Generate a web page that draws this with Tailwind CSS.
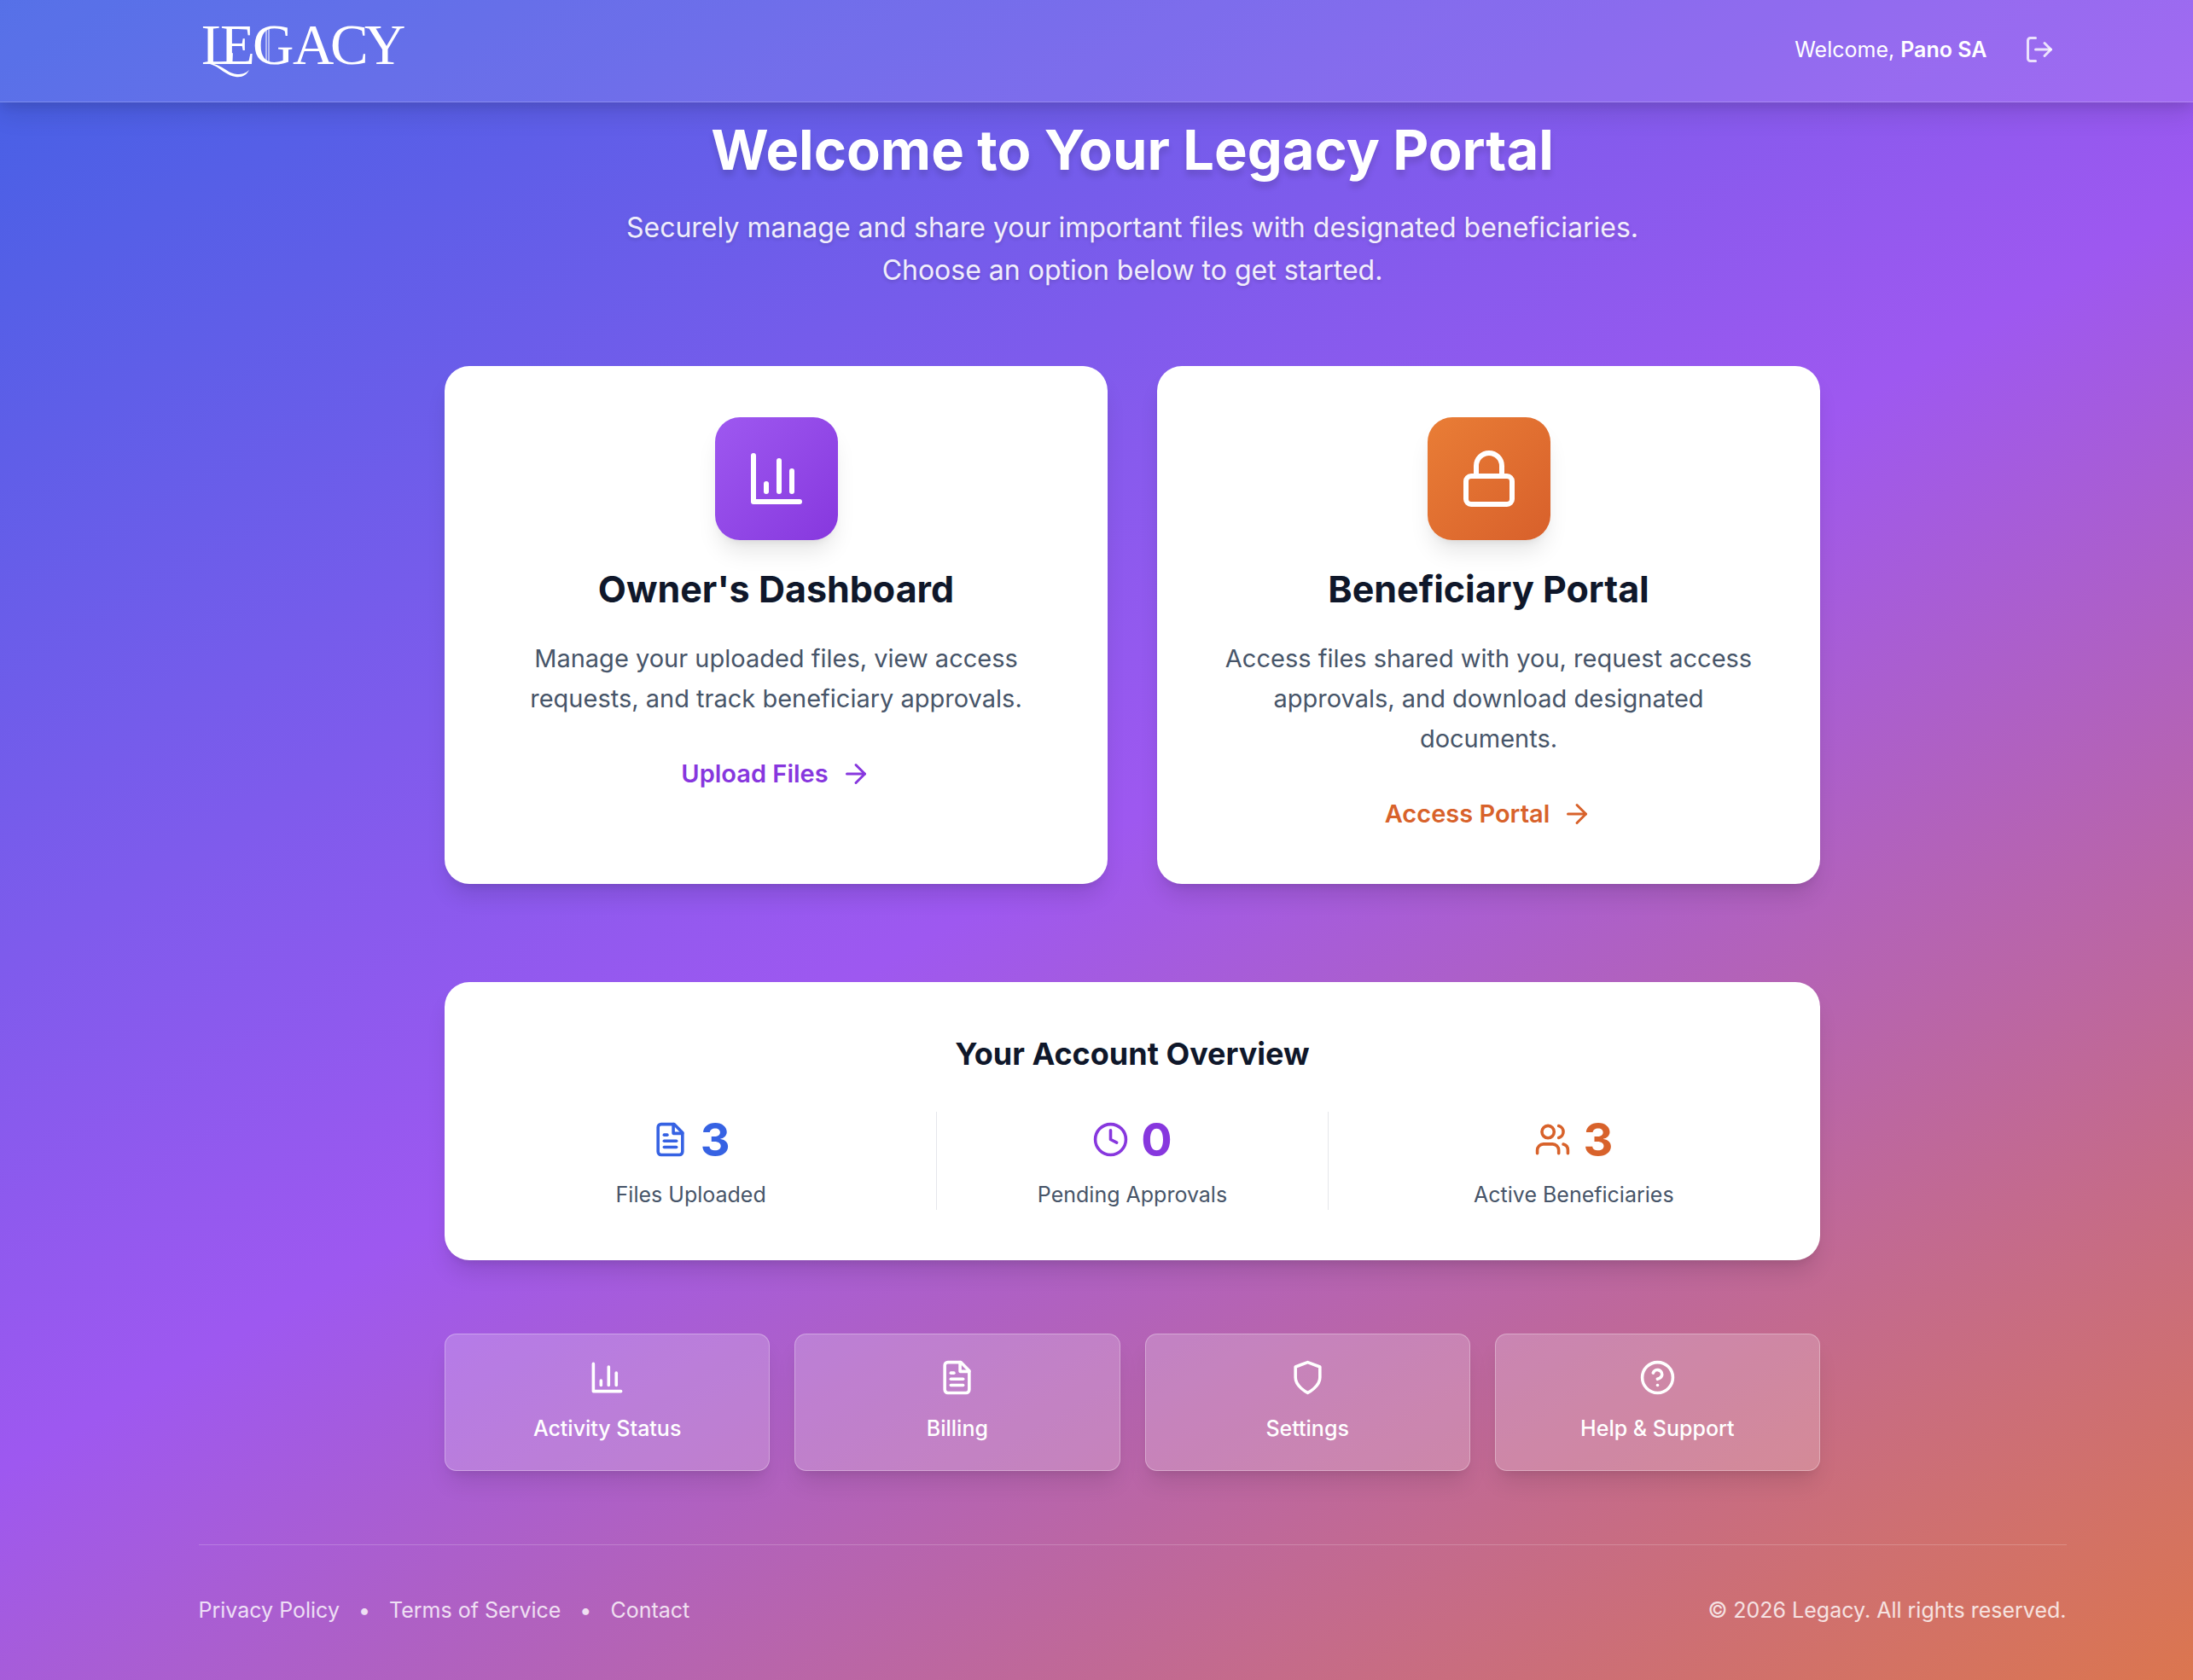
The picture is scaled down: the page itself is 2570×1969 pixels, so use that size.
<!DOCTYPE html>
<html lang="en">
<head>
  <meta charset="UTF-8" />
  <meta name="viewport" content="width=device-width, initial-scale=1.0" />
  <title>Legacy Portal</title>
  <script src="https://cdn.jsdelivr.net/npm/@tailwindcss/browser@4"></script>
</head>
<body class="font-['Inter',sans-serif] text-[25px] leading-[36px] text-white">

  <!-- Icon sprite -->
  <svg class="hidden">
    <symbol id="chart" viewBox="0 0 24 24"><path d="M3 3v18h18"/><path d="M18 17V9"/><path d="M13 17V5"/><path d="M8 17v-3"/></symbol>
    <symbol id="lock" viewBox="0 0 24 24"><rect x="3" y="11" width="18" height="11" rx="2"/><path d="M7 11V7a5 5 0 0 1 10 0v4"/></symbol>
    <symbol id="arrow" viewBox="0 0 24 24"><path d="M5 12h14"/><path d="m12 5 7 7-7 7"/></symbol>
    <symbol id="file" viewBox="0 0 24 24"><path d="M14.500 2H6a2 2 0 0 0-2 2v16a2 2 0 0 0 2 2h12a2 2 0 0 0 2-2V7.500L14.500 2z"/><path d="M14 2v6h6"/><path d="M16 13H8"/><path d="M16 17H8"/><path d="M10 9H8"/></symbol>
    <symbol id="clock" viewBox="0 0 24 24"><circle cx="12" cy="12" r="10"/><path d="M12 6v6l4 2"/></symbol>
    <symbol id="users" viewBox="0 0 24 24"><path d="M16 21v-2a4 4 0 0 0-4-4H6a4 4 0 0 0-4 4v2"/><circle cx="9" cy="7" r="4"/><path d="M22 21v-2a4 4 0 0 0-3-3.870"/><path d="M16 3.130a4 4 0 0 1 0 7.750"/></symbol>
    <symbol id="shield" viewBox="0 0 24 24"><path d="M12 22s8-4 8-10V5l-8-3-8 3v7c0 6 8 10 8 10"/></symbol>
    <symbol id="help" viewBox="0 0 24 24"><circle cx="12" cy="12" r="10"/><path d="M9.090 9a3 3 0 0 1 5.830 1c0 2-3 3-3 3"/><path d="M12 17h.01"/></symbol>
    <symbol id="logout" viewBox="0 0 24 24"><path d="M9 21H5a2 2 0 0 1-2-2V5a2 2 0 0 1 2-2h4"/><path d="m16 17 5-5-5-5"/><path d="M21 12H9"/></symbol>
  </svg>

  <div class="min-h-screen overflow-x-hidden bg-[linear-gradient(150deg,#3662e3_-7%,#9e58f0_50%,#e47a38_107%)]">

    <!-- Header -->
    <header class="bg-white/10 border-b border-white/20 shadow-[0_14px_27px_0_rgba(0,0,0,0.1),0_5px_11px_0_rgba(0,0,0,0.08)] pl-[84px]">
      <div class="max-w-[2305px] mx-auto px-[58px] h-[119px] pb-[3px] flex justify-between items-center">
        <a href="#" aria-label="Legacy">
          <svg class="w-[250px] h-[72px] overflow-visible" viewBox="0 0 250 72" fill="white">
            <text x="3 25 63 110 154 194" y="53" font-family="Liberation Serif, serif" font-size="67">LEGACY</text>
            <path d="M8 52c18-1 24 12 37 13 6 0 10-1 14-5-3 6-8 9-16 8-14-2-19-14-35-16z"/>
            <path d="M79 11v39M82 10v41" stroke="white" stroke-width="1"/>
          </svg>
        </a>
        <div class="flex items-center gap-[29px]">
          <span>Welcome, <strong class="font-semibold">Pano SA</strong></span>
          <button type="button" aria-label="Log out" class="p-[14px] text-white/80 cursor-pointer">
            <svg class="size-9" fill="none" stroke="currentColor" stroke-width="2" stroke-linecap="round" stroke-linejoin="round"><use href="#logout"/></svg>
          </button>
        </div>
      </div>
    </header>

    <div class="pl-[84px]">
      <div class="max-w-[2305px] mx-auto px-[58px]">
        <main class="max-w-[1612px] mx-auto pt-5">

          <div class="text-center mb-[87px]">
            <h1 class="text-[65px] leading-[72px] font-bold mb-[30px] text-shadow-[0_7px_7px_rgba(0,0,0,0.12)]">Welcome to Your Legacy Portal</h1>
            <p class="text-[32px] leading-[50px] text-white/90 max-w-[1210px] mx-auto text-shadow-[0_2px_4px_rgba(0,0,0,0.15)]">Securely manage and share your important files with designated beneficiaries. Choose an option below to get started.</p>
          </div>

          <!-- Main cards -->
          <div class="grid grid-cols-2 gap-[58px] mb-[115px] text-center text-[29px]">
            <section class="bg-white rounded-[29px] p-[60px] pb-[61px] shadow-[0_18px_27px_-5px_rgba(0,0,0,0.12),0_7px_11px_-7px_rgba(0,0,0,0.12)]">
              <div class="size-36 mx-auto mb-7 rounded-[29px] bg-linear-to-br from-[#9e58f0] to-[#8737de] flex items-center justify-center shadow-[0_18px_27px_-5px_rgba(0,0,0,0.1),0_7px_11px_-7px_rgba(0,0,0,0.1)]">
                <svg class="size-18" fill="none" stroke="currentColor" stroke-width="2" stroke-linecap="round" stroke-linejoin="round"><use href="#chart"/></svg>
              </div>
              <h2 class="text-[43px] leading-[58px] font-bold text-[#0f172a] mb-[29px]">Owner's Dashboard</h2>
              <p class="leading-[47px] text-[#475569] mb-[43px]">Manage your uploaded files, view access requests, and track beneficiary approvals.</p>
              <a href="#" class="leading-[43px] flex items-center justify-center gap-[14px] font-semibold text-[#8737de]">Upload Files
                <svg class="size-9" fill="none" stroke="currentColor" stroke-width="2" stroke-linecap="round" stroke-linejoin="round"><use href="#arrow"/></svg>
              </a>
            </section>
            <section class="bg-white rounded-[29px] p-[60px] pb-[61px] shadow-[0_18px_27px_-5px_rgba(0,0,0,0.12),0_7px_11px_-7px_rgba(0,0,0,0.12)]">
              <div class="size-36 mx-auto mb-7 rounded-[29px] bg-linear-to-br from-[#e97d36] to-[#d8602b] flex items-center justify-center shadow-[0_18px_27px_-5px_rgba(0,0,0,0.1),0_7px_11px_-7px_rgba(0,0,0,0.1)]">
                <svg class="size-18" fill="none" stroke="currentColor" stroke-width="2" stroke-linecap="round" stroke-linejoin="round"><use href="#lock"/></svg>
              </div>
              <h2 class="text-[43px] leading-[58px] font-bold text-[#0f172a] mb-[29px]">Beneficiary Portal</h2>
              <p class="leading-[47px] text-[#475569] mb-[43px]">Access files shared with you, request access approvals, and download designated documents.</p>
              <a href="#" class="leading-[43px] flex items-center justify-center gap-[14px] font-semibold text-[#d8622b]">Access Portal
                <svg class="size-9" fill="none" stroke="currentColor" stroke-width="2" stroke-linecap="round" stroke-linejoin="round"><use href="#arrow"/></svg>
              </a>
            </section>
          </div>

          <!-- Account overview -->
          <section class="bg-white rounded-[29px] p-[59px] mb-[86px] text-center shadow-[0_18px_27px_-5px_rgba(0,0,0,0.12),0_7px_11px_-7px_rgba(0,0,0,0.12)]">
            <h2 class="text-[36px] leading-[50px] font-bold text-[#0f172a] mb-[43px]">Your Account Overview</h2>
            <div class="grid grid-cols-3 gap-[58px] text-[#475569]">
              <div>
                <div class="flex items-center justify-center gap-[14px] mb-[14px] text-[54px] leading-[65px] font-bold text-[#3662e3]">
                  <svg class="size-[43px]" fill="none" stroke="currentColor" stroke-width="2" stroke-linecap="round" stroke-linejoin="round"><use href="#file"/></svg>3
                </div>
                <p>Files Uploaded</p>
              </div>
              <div class="border-x border-[#e5e7eb]">
                <div class="flex items-center justify-center gap-[14px] mb-[14px] text-[54px] leading-[65px] font-bold text-[#8737de]">
                  <svg class="size-[43px]" fill="none" stroke="currentColor" stroke-width="2" stroke-linecap="round" stroke-linejoin="round"><use href="#clock"/></svg>0
                </div>
                <p>Pending Approvals</p>
              </div>
              <div>
                <div class="flex items-center justify-center gap-[14px] mb-[14px] text-[54px] leading-[65px] font-bold text-[#d8622b]">
                  <svg class="size-[43px]" fill="none" stroke="currentColor" stroke-width="2" stroke-linecap="round" stroke-linejoin="round"><use href="#users"/></svg>3
                </div>
                <p>Active Beneficiaries</p>
              </div>
            </div>
          </section>

          <!-- Quick actions -->
          <div class="grid grid-cols-4 gap-[29px] mb-[86px] font-medium">
            <a href="#" class="flex flex-col items-center gap-5 pt-[29px] pb-[31px] bg-white/20 border border-white/30 rounded-[14px] shadow-[0_18px_27px_-5px_rgba(0,0,0,0.1),0_7px_11px_-7px_rgba(0,0,0,0.1)]">
              <svg class="size-[43px]" fill="none" stroke="currentColor" stroke-width="2" stroke-linecap="round" stroke-linejoin="round"><use href="#chart"/></svg>
              Activity Status
            </a>
            <a href="#" class="flex flex-col items-center gap-5 pt-[29px] pb-[31px] bg-white/20 border border-white/30 rounded-[14px] shadow-[0_18px_27px_-5px_rgba(0,0,0,0.1),0_7px_11px_-7px_rgba(0,0,0,0.1)]">
              <svg class="size-[43px]" fill="none" stroke="currentColor" stroke-width="2" stroke-linecap="round" stroke-linejoin="round"><use href="#file"/></svg>
              Billing
            </a>
            <a href="#" class="flex flex-col items-center gap-5 pt-[29px] pb-[31px] bg-white/20 border border-white/30 rounded-[14px] shadow-[0_18px_27px_-5px_rgba(0,0,0,0.1),0_7px_11px_-7px_rgba(0,0,0,0.1)]">
              <svg class="size-[43px]" fill="none" stroke="currentColor" stroke-width="2" stroke-linecap="round" stroke-linejoin="round"><use href="#shield"/></svg>
              Settings
            </a>
            <a href="#" class="flex flex-col items-center gap-5 pt-[29px] pb-[31px] bg-white/20 border border-white/30 rounded-[14px] shadow-[0_18px_27px_-5px_rgba(0,0,0,0.1),0_7px_11px_-7px_rgba(0,0,0,0.1)]">
              <svg class="size-[43px]" fill="none" stroke="currentColor" stroke-width="2" stroke-linecap="round" stroke-linejoin="round"><use href="#help"/></svg>
              Help &amp; Support
            </a>
          </div>
        </main>

        <!-- Footer -->
        <footer class="border-t border-white/20 py-[58px] flex justify-between items-center text-white/80">
          <nav class="flex gap-[22px]">
            <a href="#">Privacy Policy</a>
            <span>•</span>
            <a href="#">Terms of Service</a>
            <span>•</span>
            <a href="#">Contact</a>
          </nav>
          <p>© 2026 Legacy. All rights reserved.</p>
        </footer>
      </div>
    </div>
  </div>

</body>
</html>
